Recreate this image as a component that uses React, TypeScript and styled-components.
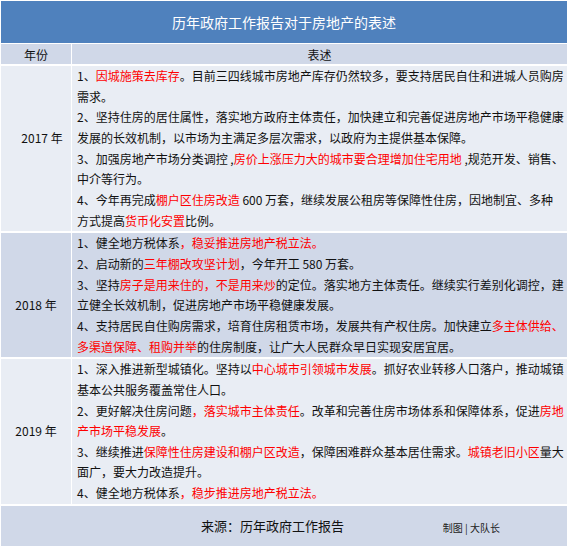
import React from "react";
import styled, { createGlobalStyle } from "styled-components";

const LINE = 20.67;

const Global = createGlobalStyle`
  html, body { margin: 0; padding: 0; background: #ffffff; }
  body { font-family: "Noto Sans CJK SC", "Noto Sans", sans-serif; }
`;

const Page = styled.div`
  width: 568px;
  height: 548px;
  box-sizing: border-box;
  padding: 1px;
  background: #ffffff;
  display: flex;
  flex-direction: column;
  overflow: hidden;
`;

const TitleBar = styled.div`
  height: 42px;
  background: #4f81bd;
  color: #ffffff;
  font-size: 14px;
  display: flex;
  align-items: center;
  justify-content: center;
`;

const Row = styled.div<{ $bg: string; $gap: number }>`
  margin-top: ${(p) => p.$gap}px;
  display: grid;
  grid-template-columns: 70px 1fr;
  column-gap: 1px;
  & > * { background: ${(p) => p.$bg}; }
`;

const HeadCell = styled.div`
  height: 20px;
  font-size: 12px;
  color: #111;
  display: flex;
  align-items: center;
  justify-content: center;
`;

const YearCell = styled.div<{ $shift?: number }>`
  font-size: 12px;
  line-height: ${LINE}px;
  color: #111;
  text-align: center;
  padding-top: ${LINE * 3}px;
  padding-left: ${(p) => (p.$shift ?? 0) * 2}px;
  white-space: pre;
`;

const TextCell = styled.div`
  font-size: 12px;
  line-height: ${LINE}px;
  color: #111;
  padding-left: 5px;
  overflow: hidden;
`;

const Line = styled.div`
  white-space: pre;
  height: ${LINE}px;
`;

const Red = styled.span`
  color: #ff0000;
`;

const Footer = styled.div`
  margin-top: 2px;
  height: 40px;
  background: #d0d8e8;
  display: flex;
  align-items: center;
  padding-left: 200px;
`;

const Source = styled.div`
  font-size: 13px;
  color: #111;
`;

const Credit = styled.div`
  margin-left: auto;
  margin-right: 67px;
  margin-top: 3px;
  font-size: 10px;
  color: #222;
`;

type Seg = string | { r: string };

const rows: { year: string; bg: string; shift?: number; lines: Seg[][] }[] = [
  {
    year: "2017 年",
    bg: "#e9edf4",
    shift: 6,
    lines: [
      ["1、", { r: "因城施策去库存" }, "。目前三四线城市房地产库存仍然较多，要支持居民自住和进城人员购房"],
      ["需求。"],
      ["2、坚持住房的居住属性，落实地方政府主体责任，加快建立和完善促进房地产市场平稳健康"],
      ["发展的长效机制，以市场为主满足多层次需求，以政府为主提供基本保障。"],
      ["3、加强房地产市场分类调控 ,", { r: "房价上涨压力大的城市要合理增加住宅用地" }, " ,规范开发、销售、"],
      ["中介等行为。"],
      ["4、今年再完成", { r: "棚户区住房改造" }, " 600 万套，继续发展公租房等保障性住房，因地制宜、多种"],
      ["方式提高", { r: "货币化安置" }, "比例。"],
    ],
  },
  {
    year: "2018 年",
    bg: "#d0d8e8",
    lines: [
      ["1、健全地方税体系", { r: "，稳妥推进房地产税立法。" }],
      ["2、启动新的", { r: "三年棚改攻坚计划" }, "，今年开工 580 万套。"],
      ["3、坚持", { r: "房子是用来住的，不是用来炒" }, "的定位。落实地方主体责任。继续实行差别化调控，建"],
      ["立健全长效机制，促进房地产市场平稳健康发展。"],
      ["4、支持居民自住购房需求，培育住房租赁市场，发展共有产权住房。加快建立", { r: "多主体供给、" }],
      [{ r: "多渠道保障、租购并举" }, "的住房制度，让广大人民群众早日实现安居宜居。"],
    ],
  },
  {
    year: "2019 年",
    bg: "#e9edf4",
    lines: [
      ["1、深入推进新型城镇化。坚持以", { r: "中心城市引领城市发展" }, "。抓好农业转移人口落户，推动城镇"],
      ["基本公共服务覆盖常住人口。"],
      ["2、更好解决住房问题", { r: "，落实城市主体责任" }, "。改革和完善住房市场体系和保障体系，促进", { r: "房地" }],
      [{ r: "产市场平稳发展" }, "。"],
      ["3、继续推进", { r: "保障性住房建设和棚户区改造" }, "，保障困难群众基本居住需求。", { r: "城镇老旧小区" }, "量大"],
      ["面广，要大力改造提升。"],
      ["4、健全地方税体系", { r: "，稳步推进房地产税立法。" }],
    ],
  },
];

export default function App() {
  return (
    <>
      <Global />
      <Page>
        <TitleBar>历年政府工作报告对于房地产的表述</TitleBar>
        <Row $bg="#d0d8e8" $gap={1}>
          <HeadCell>年份</HeadCell>
          <HeadCell>表述</HeadCell>
        </Row>
        {rows.map((row) => (
          <Row key={row.year} $bg={row.bg} $gap={2}>
            <YearCell $shift={row.shift}>{row.year}</YearCell>
            <TextCell>
              {row.lines.map((line, i) => (
                <Line key={i}>
                  {line.map((s, j) =>
                    typeof s === "string" ? (
                      <React.Fragment key={j}>{s}</React.Fragment>
                    ) : (
                      <Red key={j}>{s.r}</Red>
                    )
                  )}
                </Line>
              ))}
            </TextCell>
          </Row>
        ))}
        <Footer>
          <Source>来源：历年政府工作报告</Source>
          <Credit>制图 | 大队长</Credit>
        </Footer>
      </Page>
    </>
  );
}
